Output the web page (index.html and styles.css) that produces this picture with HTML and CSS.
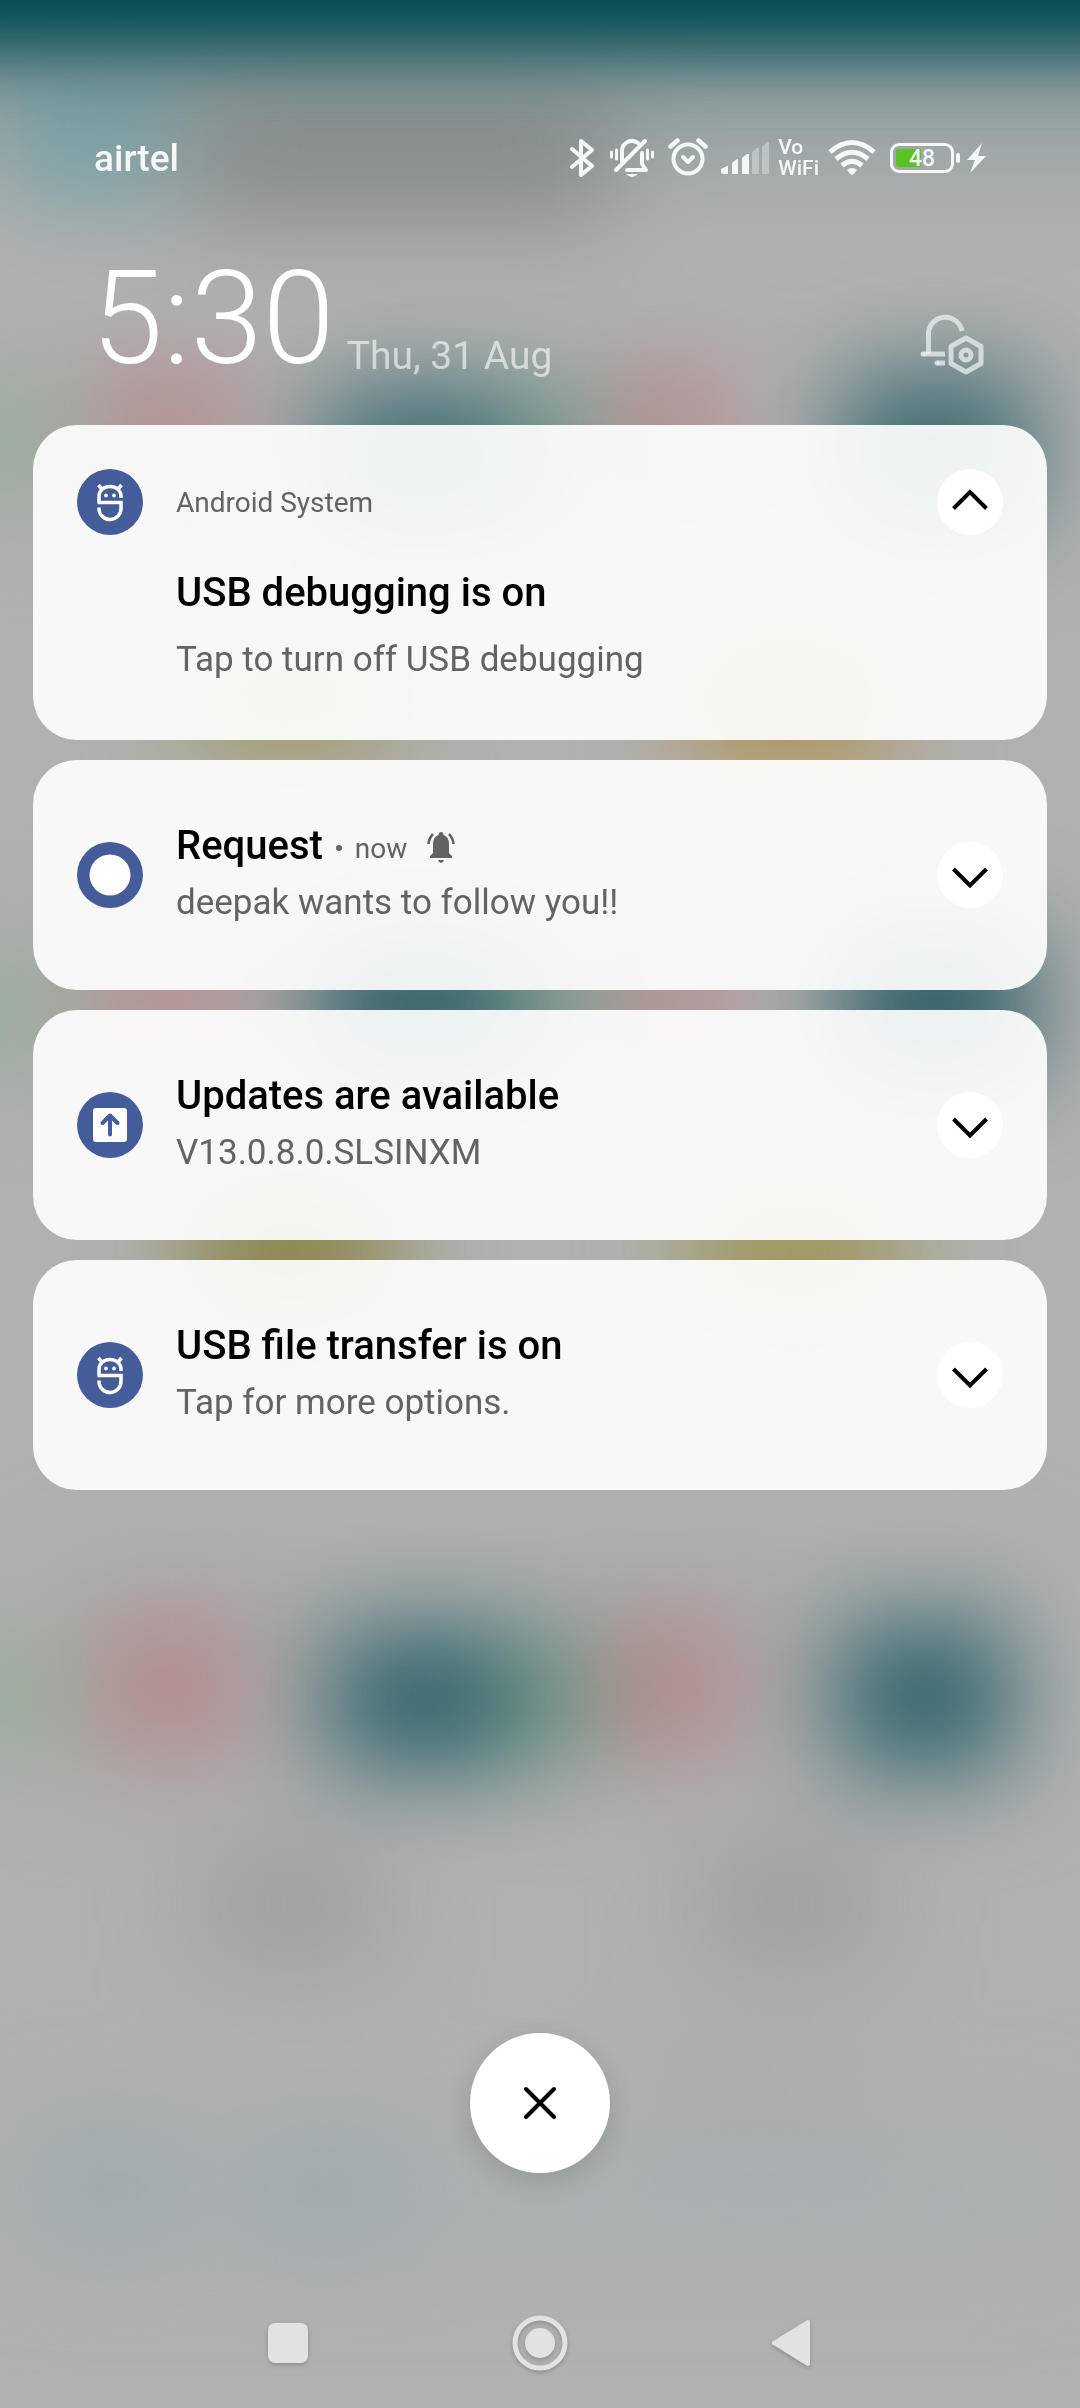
FILE: index.html
```html
<!DOCTYPE html>
<html lang="en">
<head>
<meta charset="utf-8">
<meta name="viewport" content="width=device-width, initial-scale=1">
<title>Notifications</title>
<link rel="stylesheet" href="styles.css">
</head>
<body>
<svg class="defs" aria-hidden="true">
  <symbol id="android" viewBox="0 0 66 66">
    <g fill="none" stroke="#fff" stroke-width="3.500">
      <path d="M22 33V27a11 9.500 0 0 1 22 0v2"/>
      <path d="M20.500 33.500H44V39a11 11 0 0 1-22 1v-1.500"/>
      <path d="M24.500 19.500l-3-3.500M41.500 19.500l3-3.500"/>
    </g>
    <circle cx="29" cy="26.500" r="1.900" fill="#fff"/><circle cx="37" cy="26.500" r="1.900" fill="#fff"/>
  </symbol>
</svg>
<div class="screen">
  <svg class="wallpaper" viewBox="0 0 1080 2408" preserveAspectRatio="none" aria-hidden="true">
    <defs>
      <filter id="soft" x="-300" y="-300" width="1680" height="3008" filterUnits="userSpaceOnUse" color-interpolation-filters="sRGB"><feGaussianBlur stdDeviation="50"/></filter>
      <filter id="band" x="-300" y="-400" width="1680" height="1000" filterUnits="userSpaceOnUse" color-interpolation-filters="sRGB"><feGaussianBlur stdDeviation="36"/></filter>
    </defs>
    <rect width="1080" height="2408" fill="#b1b1b1"/>
    <g filter="url(#soft)">
      <rect x="-200" y="60" width="1480" height="100" fill="#7f9696" opacity=".65"/>
      <rect x="20" y="80" width="140" height="120" fill="#529aa2" opacity=".6"/>
      <rect x="190" y="90" width="420" height="130" fill="#7c8080" opacity=".75"/>

      <rect x="-160" y="380" width="240" height="120" fill="#99ab9c"/>
      <rect x="100" y="370" width="140" height="110" fill="#b4888a"/>
      <rect x="320" y="390" width="200" height="135" fill="#38696f"/>
      <rect x="520" y="390" width="85" height="120" fill="#78a18e"/>
      <rect x="610" y="370" width="120" height="110" fill="#b4888a"/>
      <rect x="840" y="375" width="190" height="150" fill="#38696f"/>

      <rect x="190" y="640" width="200" height="110" fill="#9c9658"/>
      <rect x="690" y="640" width="200" height="120" fill="#b08e45"/>

      <rect x="-160" y="950" width="240" height="120" fill="#99ab9c"/>
      <rect x="100" y="940" width="140" height="110" fill="#b4888a"/>
      <rect x="315" y="940" width="200" height="130" fill="#25595f"/>
      <rect x="515" y="950" width="90" height="110" fill="#78a18e"/>
      <rect x="610" y="940" width="120" height="110" fill="#b4888a"/>
      <rect x="840" y="935" width="190" height="140" fill="#25595f"/>

      <rect x="190" y="1190" width="200" height="120" fill="#85803c"/>
      <rect x="690" y="1190" width="210" height="120" fill="#9a9450"/>

      <rect x="60" y="1560" width="960" height="220" fill="#a2a5a6" opacity=".5"/>
      <rect x="-160" y="1635" width="240" height="120" fill="#9aac9c"/>
      <rect x="100" y="1620" width="140" height="130" fill="#b6878a"/>
      <rect x="330" y="1632" width="185" height="136" fill="#2d636a"/>
      <rect x="515" y="1635" width="90" height="125" fill="#729b86"/>
      <rect x="605" y="1620" width="130" height="130" fill="#b6878a"/>
      <rect x="840" y="1625" width="170" height="145" fill="#2d636a"/>

      <rect x="200" y="1845" width="180" height="120" fill="#96989c" opacity=".75"/>
      <rect x="700" y="1845" width="180" height="120" fill="#96989c" opacity=".75"/>
      <rect x="660" y="2050" width="200" height="90" fill="#a3a4a6" opacity=".5"/>

      <rect x="0" y="2120" width="1080" height="140" fill="#a6afb2" opacity=".6"/>
      <rect x="45" y="2140" width="120" height="90" fill="#8fa4a8" opacity=".7"/>
      <rect x="265" y="2145" width="120" height="90" fill="#8fa4a8" opacity=".7"/>
    </g>
    <rect x="-200" y="-300" width="1480" height="358" fill="#004a52" filter="url(#band)"/>
  </svg>
  <header class="status">
    <span class="carrier">airtel</span>
    <div class="status-icons">
      <svg class="bt" width="24" height="40" viewBox="0 0 24 40"><path d="M2 11l20 17-11 9V3l11 9L2 29" fill="none" stroke="currentColor" stroke-width="4" stroke-linejoin="round" stroke-linecap="round"/></svg>
      <svg class="mute" width="44" height="40" viewBox="0 0 44 40"><g fill="none" stroke="currentColor" stroke-width="4" stroke-linecap="round"><path d="M12 23V13A10 10 0 0 1 28 5M6 32L35 3M17 32H36L32 26V15" stroke-linejoin="round"/><path d="M1.500 14v5M6.500 12v9M37.500 12v9M42.500 14v5" stroke-width="3"/></g><path d="M16 36h12q-6 6-12 0z" fill="currentColor"/></svg>
      <svg class="alarm" width="40" height="40" viewBox="0 0 40 40"><g fill="none" stroke="currentColor" stroke-linecap="round" stroke-linejoin="round"><circle cx="20" cy="21" r="14.500" stroke-width="4"/><path d="M15 19l5 5 5-5" stroke-width="4"/><path d="M2.500 8.500l7-6M37.500 8.500l-7-6" stroke-width="4.500"/></g></svg>
      <svg class="signal" width="48" height="40" viewBox="0 0 48 40"><path d="M0 35v-4l6-3h1v8H2zM11 36V25l5-4h1v15zM21 36V20l5-4h2v20z" fill="currentColor"/><path d="M31 36V14l5-4h2v26zM41 36V9l5-5h2v32z" fill="currentColor" opacity=".35"/></svg>
      <span class="vowifi"><span>Vo</span><span>WiFi</span></span>
      <svg class="wifi" width="48" height="40" viewBox="0 0 48 40"><g fill="none" stroke="currentColor" stroke-width="5"><path d="M2 14Q24-5 46 14"/><path d="M8 21Q24 7.500 40 21"/><path d="M14 27.500Q24 19 34 27.500"/></g><path d="M19 32q5-4 10 0l-3 4q-2 1.500-4 0z" fill="currentColor"/></svg>
      <span class="battery"><span class="battery-body"><span class="battery-fill" style="width:48%"></span><span class="battery-text">48</span></span><span class="battery-nub"></span></span>
      <svg class="bolt" width="20" height="40" viewBox="0 0 20 40"><path d="M16 5L1 22h8L4 35 20 18h-8z" fill="currentColor"/></svg>
    </div>
  </header>
  <div class="clock-row">
    <time class="clock">5:30</time>
    <span class="date">Thu, 31 Aug</span>
    <button class="manage" aria-label="Notification settings"><svg width="66" height="64" viewBox="0 0 66 64"><g fill="none" stroke="currentColor" stroke-width="5"><path d="M8.500 43V21A17 17 0 0 1 42 20"/><path d="M3 43h22M17 52h8" stroke-linecap="butt"/><path d="M46 27l15 8.500v17L46 61l-15-8.500v-17z" stroke-linejoin="round"/><circle cx="46" cy="44" r="5"/></g><circle cx="3" cy="43" r="2.500" fill="currentColor"/><circle cx="17" cy="52" r="2.500" fill="currentColor"/></svg></button>
  </div>
  <main class="list">
    <article class="card expanded">
      <span class="badge"><svg width="66" height="66"><use href="#android"/></svg></span>
      <span class="app">Android System</span>
      <button class="toggle" aria-label="Collapse"><svg width="66" height="66" viewBox="0 0 66 66"><path d="M16.500 39.500L33 23l16.500 16.500"/></svg></button>
      <div class="text"><h2>USB debugging is on</h2><p>Tap to turn off USB debugging</p></div>
    </article>
    <article class="card">
      <span class="badge"><svg width="66" height="66" viewBox="0 0 66 66"><circle cx="33" cy="33" r="20.500" fill="#fff"/></svg></span>
      <div class="text"><div class="title-row"><h2>Request</h2><span class="dot"></span><span class="when">now</span><svg class="ring" width="28" height="32" viewBox="0 0 28 32"><path d="M3 27v-2l3-3v-9Q6 6 11.500 4q0-3 2.500-3t2.500 3Q22 6 22 13v9l3 3v2zM11 29h6q-1 3-3 3t-3-3z" fill="currentColor"/><path d="M1.500 13Q2 7 6 3M26.500 13Q26 7 22 3" fill="none" stroke="currentColor" stroke-width="2.500"/></svg></div><p>deepak wants to follow you!!</p></div>
      <button class="toggle" aria-label="Expand"><svg width="66" height="66" viewBox="0 0 66 66"><path d="M16.500 27L33 43.500 49.500 27"/></svg></button>
    </article>
    <article class="card">
      <span class="badge"><svg width="66" height="66" viewBox="0 0 66 66"><rect x="16" y="16" width="34" height="34" rx="3" fill="#fff"/><path d="M33 42.500V24M25.500 31l7.500-7.500 7.500 7.500" fill="none" stroke="#445c99" stroke-width="4" stroke-linecap="round" stroke-linejoin="round"/></svg></span>
      <div class="text"><h2>Updates are available</h2><p>V13.0.8.0.SLSINXM</p></div>
      <button class="toggle" aria-label="Expand"><svg width="66" height="66" viewBox="0 0 66 66"><path d="M16.500 27L33 43.500 49.500 27"/></svg></button>
    </article>
    <article class="card">
      <span class="badge"><svg width="66" height="66"><use href="#android"/></svg></span>
      <div class="text"><h2>USB file transfer is on</h2><p>Tap for more options.</p></div>
      <button class="toggle" aria-label="Expand"><svg width="66" height="66" viewBox="0 0 66 66"><path d="M16.500 27L33 43.500 49.500 27"/></svg></button>
    </article>
  </main>
  <button class="clear" aria-label="Clear all"><svg width="36" height="36" viewBox="0 0 36 36"><path d="M4 4l28 28M32 4L4 32" fill="none" stroke="#000" stroke-width="4" stroke-linecap="round"/></svg></button>
  <nav class="nav">
    <button aria-label="Recents"><svg width="56" height="56" viewBox="0 0 56 56"><rect x="8" y="8" width="40" height="40" rx="7" fill="currentColor"/></svg></button>
    <button aria-label="Home"><svg width="56" height="56" viewBox="0 0 56 56"><circle cx="28" cy="28" r="25" fill="none" stroke="currentColor" stroke-width="5"/><circle cx="28" cy="28" r="15" fill="currentColor"/></svg></button>
    <button aria-label="Back"><svg width="56" height="56" viewBox="0 0 56 56"><path d="M10 28L44 7v42z" fill="currentColor" stroke="currentColor" stroke-width="4" stroke-linejoin="round"/></svg></button>
  </nav>
</div>
</body>
</html>
```
FILE: styles.css
```css
* { box-sizing: border-box; }

body {
  margin: 0;
  font-family: Roboto, "Liberation Sans", sans-serif;
  background: #b1b1b1;
}

button {
  display: flex;
  align-items: center;
  justify-content: center;
  padding: 0;
  border: 0;
  background: none;
  color: inherit;
  cursor: pointer;
}

svg { display: block; flex: none; }
h2, p { margin: 0; }
.defs { position: absolute; width: 0; height: 0; }

.screen {
  position: relative;
  isolation: isolate;
  display: flex;
  flex-direction: column;
  min-height: 100vh;
  color: #fff;
}
.wallpaper {
  position: absolute;
  inset: 0;
  z-index: -1;
  width: 100%;
  height: 100%;
}

.status {
  display: flex;
  align-items: center;
  justify-content: space-between;
  height: 44px;
  margin: 136px 94px 0;
  color: #f5f8f8;
}
.carrier { padding-top: 2px; font-size: 37px; line-height: 44px; font-weight: 500; }
.status-icons { display: flex; align-items: center; }
.mute { margin-left: 16px; }
.alarm { margin-left: 14px; }
.signal { margin-left: 13px; }
.vowifi {
  display: flex;
  flex-direction: column;
  margin-left: 9px;
  font-size: 21px;
  line-height: 21px;
  font-weight: 500;
}
.wifi { margin-left: 9px; }
.battery { display: flex; align-items: center; gap: 2px; margin-left: 14px; }
.battery-body {
  position: relative;
  width: 64px;
  height: 30px;
  padding: 3px;
  border: 3px solid currentColor;
  border-radius: 9px;
}
.battery-fill { display: block; height: 18px; border-radius: 3px 0 0 3px; background: #58c322; }
.battery-text {
  position: absolute;
  inset: 0;
  font-size: 23px;
  line-height: 26px;
  font-weight: 500;
  text-align: center;
}
.battery-nub { width: 4px; height: 10px; border-radius: 2px; background: currentColor; }
.bolt { margin-left: 6px; }

.clock-row {
  display: flex;
  align-items: flex-end;
  padding: 64px 94px 31px 91px;
}
.clock { font-size: 130px; line-height: 150px; font-weight: 300; }
.date { margin-left: 12px; padding-bottom: 14px; font-size: 39px; line-height: 48px; color: rgba(255, 255, 255, .6); }
.manage { margin: 0 0 19px auto; color: rgba(235, 240, 240, .75); }

.list { display: flex; flex-direction: column; gap: 20px; padding: 0 33px; }
.card {
  display: grid;
  grid-template-columns: 66px 1fr 66px;
  column-gap: 33px;
  align-items: center;
  min-height: 230px;
  padding: 44px;
  border-radius: 44px;
  color: #636363;
  background: rgba(255, 255, 255, .91);
}
.card.expanded { row-gap: 30px; }
.badge { width: 66px; height: 66px; border-radius: 50%; background: #445c99; }
.app { padding-top: 2px; font-size: 28px; line-height: 32px; }
.toggle { width: 66px; height: 66px; border-radius: 50%; background: #fff; }
.toggle path { fill: none; stroke: #000; stroke-width: 4; }
.text { padding-bottom: 2px; }
.text h2 { font-size: 40px; line-height: 56px; font-weight: 500; color: #000; }
.text p { font-size: 35px; line-height: 57px; }
.expanded .text { grid-column: 2 / 4; padding-bottom: 8px; }
.expanded .text p { margin-top: 10px; }
.title-row { display: flex; align-items: center; }
.dot { width: 6px; height: 6px; margin: 4px 13px 0; border-radius: 50%; background: currentColor; }
.when { padding-top: 6px; font-size: 28px; line-height: 32px; }
.ring { margin: 2px 0 0 20px; }

.clear {
  align-self: center;
  width: 140px;
  height: 140px;
  margin-top: auto;
  border-radius: 50%;
  background: #fff;
  box-shadow: 0 8px 28px rgba(0, 0, 0, .14);
}

.nav {
  display: flex;
  justify-content: center;
  gap: 196px;
  padding: 142px 0 37px;
  color: #e1e2e2;
}
.nav svg { filter: drop-shadow(0 2px 2px rgba(0, 0, 0, .2)); }
```
